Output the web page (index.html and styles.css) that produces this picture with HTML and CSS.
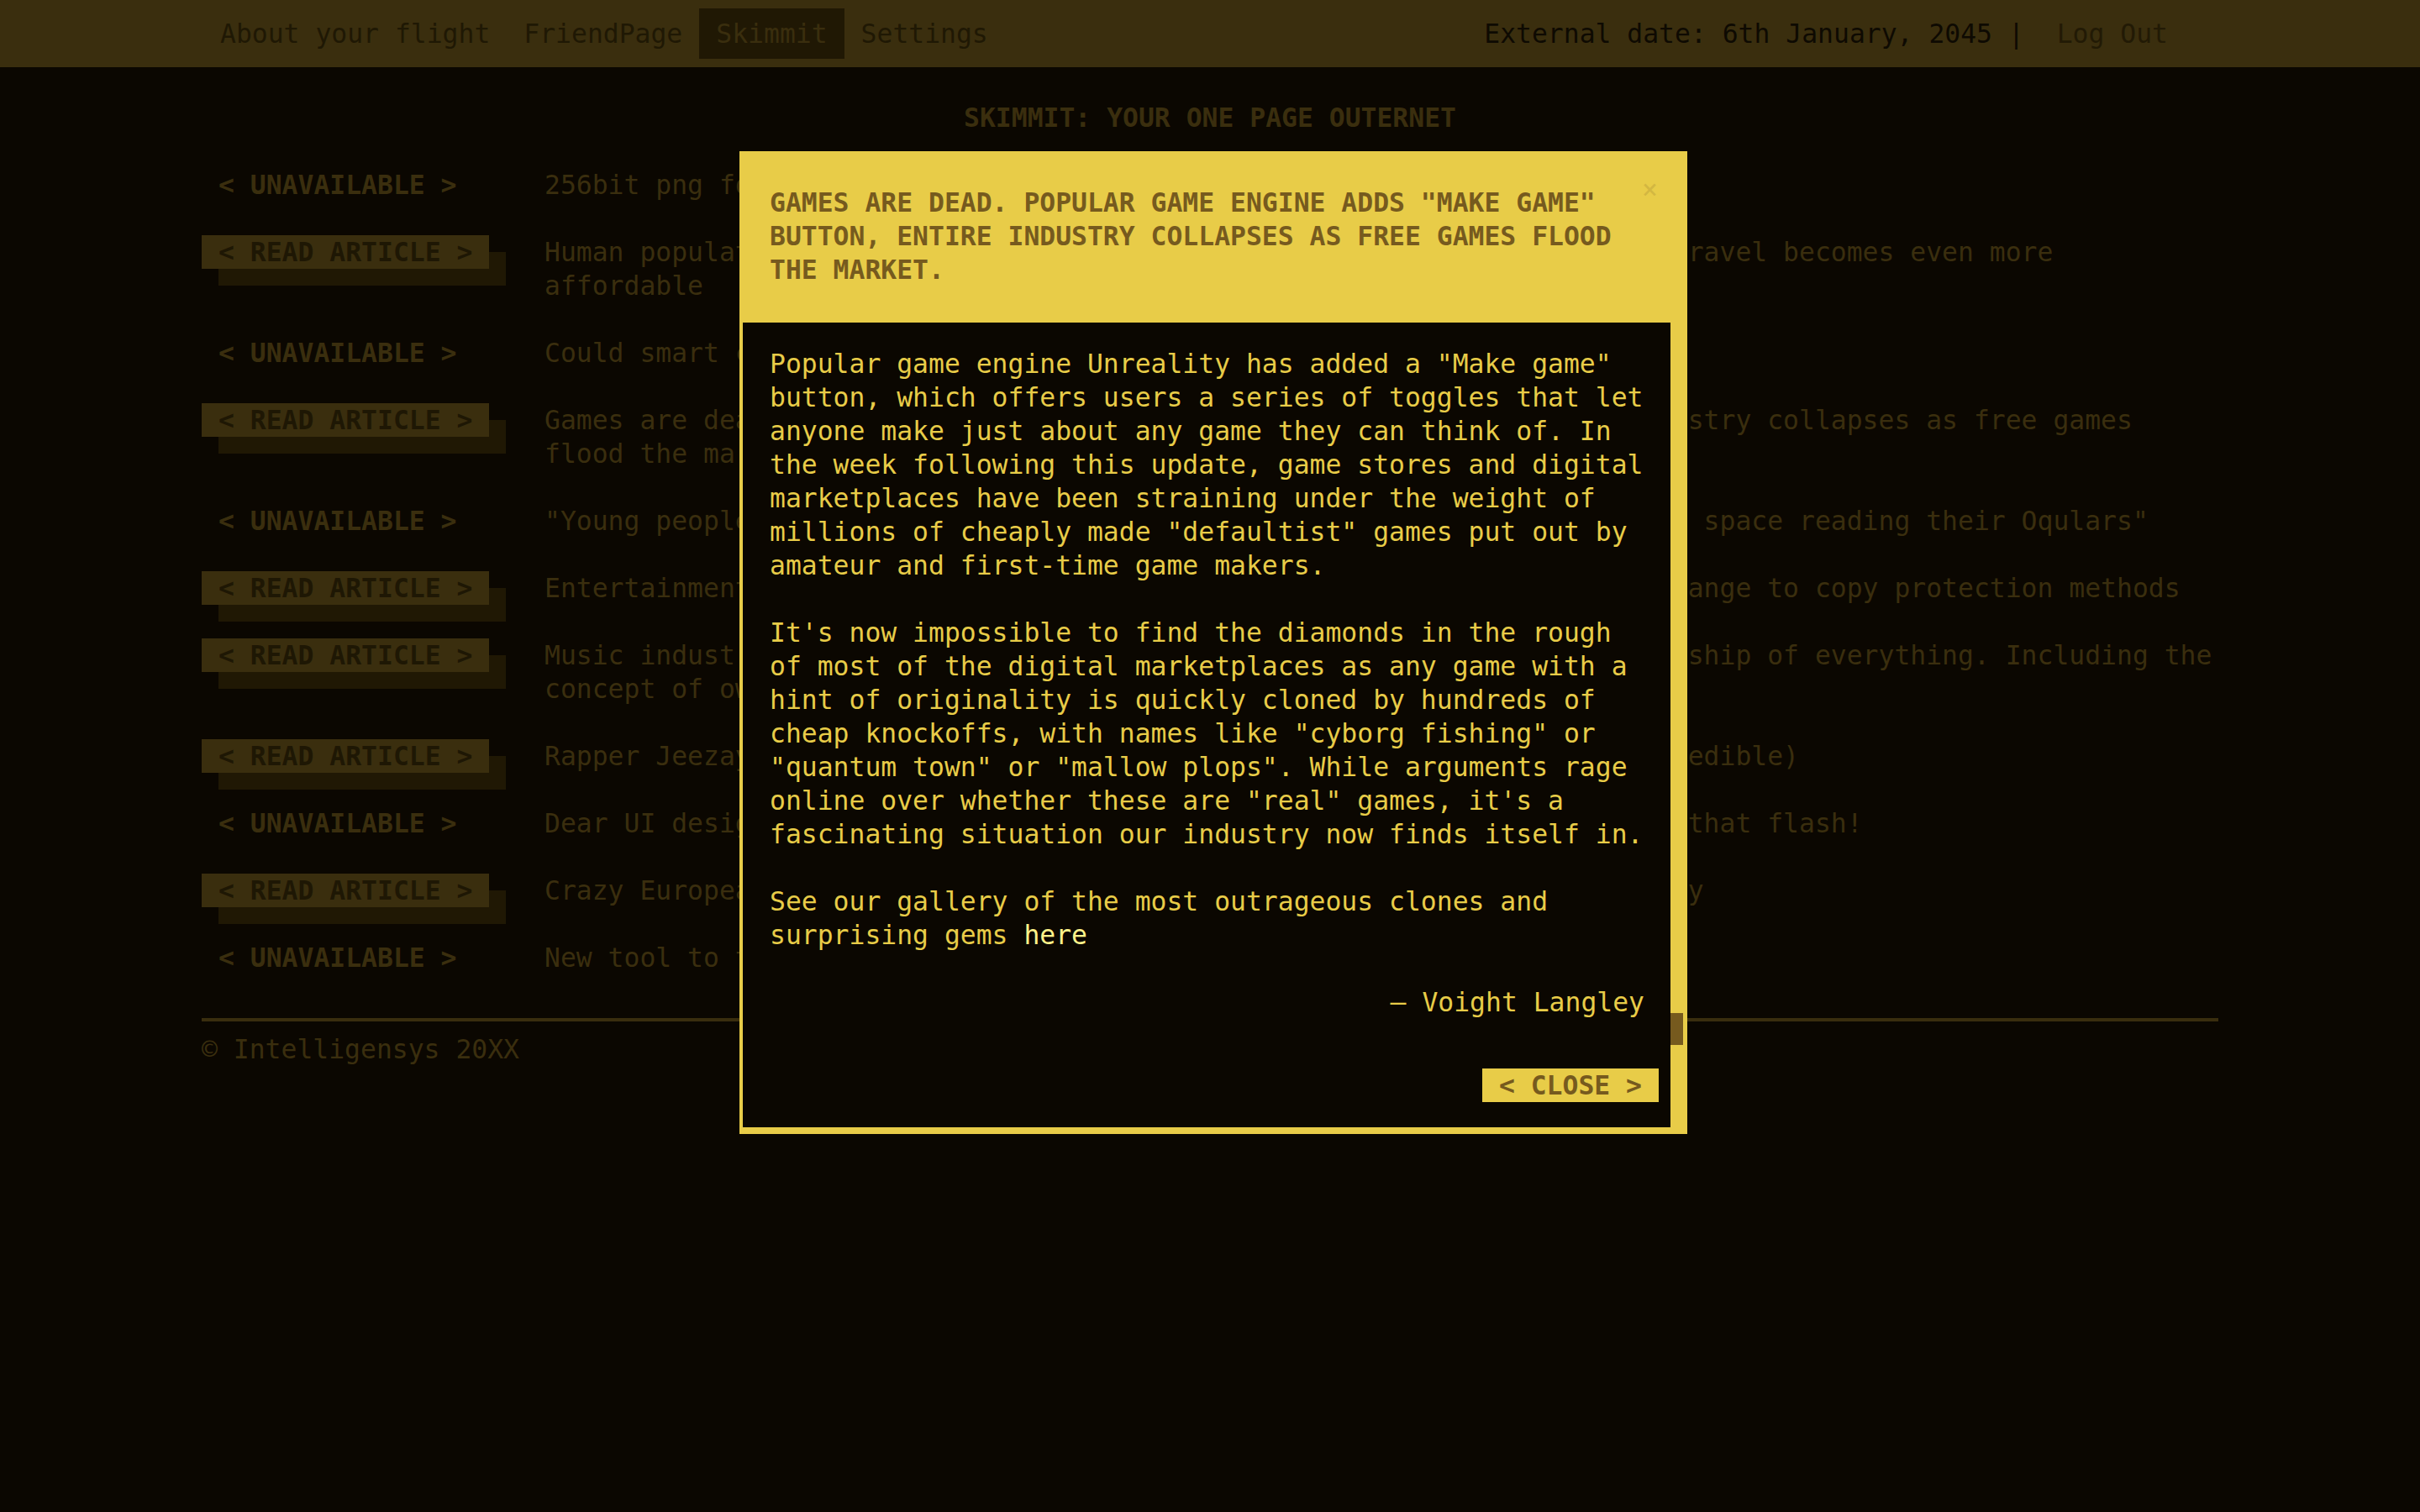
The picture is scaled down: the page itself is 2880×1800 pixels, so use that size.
FILE: index.html
```html
<!DOCTYPE html>
<html lang="en">
<head>
<meta charset="utf-8">
<title>Skimmit</title>
<link rel="stylesheet" href="styles.css">
</head>
<body>
<header class="topnav">
  <div class="wrap nav-inner">
    <nav class="nav-links">
      <a class="nav-link">About your flight</a>
      <a class="nav-link">FriendPage</a>
      <a class="nav-link active">Skimmit</a>
      <a class="nav-link">Settings</a>
    </nav>
    <div class="nav-right"><span class="ext-date">External date: 6th January, 2045 | </span><a class="logout">Log Out</a></div>
  </div>
</header>

<main class="wrap">
  <h1 class="page-title">Skimmit: your one page outernet</h1>
  <ul class="articles">
    <li class="article"><span class="btn btn-unavail">&lt; Unavailable &gt;</span><span class="desc">256bit png format finally approved as new universal image standard</span></li>
    <li class="article"><span class="btn btn-read">&lt; Read article &gt;</span><span class="desc">Human population of Mars nears twelve million, as interplanetary space travel becomes even more affordable</span></li>
    <li class="article"><span class="btn btn-unavail">&lt; Unavailable &gt;</span><span class="desc">Could smart contact lenses replace the humble screen?</span></li>
    <li class="article"><span class="btn btn-read">&lt; Read article &gt;</span><span class="desc">Games are dead. Popular game engine adds "Make game" button, entire industry collapses as free games flood the market.</span></li>
    <li class="article"><span class="btn btn-unavail">&lt; Unavailable &gt;</span><span class="desc">"Young people these days spend most of their waking moments wandering in space reading their Oqulars"</span></li>
    <li class="article"><span class="btn btn-read">&lt; Read article &gt;</span><span class="desc">Entertainment industry in uproar over proposed government legislative change to copy protection methods</span></li>
    <li class="article"><span class="btn btn-read">&lt; Read article &gt;</span><span class="desc">Music industry lobbyists demand legislation granting them complete ownership of everything. Including the concept of ownership itself.</span></li>
    <li class="article"><span class="btn btn-read">&lt; Read article &gt;</span><span class="desc">Rapper Jeezay releases new album recorded entirely in zero gravity (incredible)</span></li>
    <li class="article"><span class="btn btn-unavail">&lt; Unavailable &gt;</span><span class="desc">Dear UI designers, please stop putting huge animated buttons everywhere that flash!</span></li>
    <li class="article"><span class="btn btn-read">&lt; Read article &gt;</span><span class="desc">Crazy European scientist claims to have discovered life in our own galaxy</span></li>
    <li class="article"><span class="btn btn-unavail">&lt; Unavailable &gt;</span><span class="desc">New tool to translate cat meows into plain English</span></li>
  </ul>
  <footer class="footer">© Intelligensys 20XX</footer>
</main>

<div class="modal">
  <div class="modal-header">
    <h2 class="modal-title">Games are dead. Popular game engine adds "Make game" button, entire industry collapses as free games flood the market.</h2>
    <span class="modal-x">×</span>
  </div>
  <div class="modal-main">
    <div class="modal-body">
      <div class="modal-text">
        <p>Popular game engine Unreality has added a "Make game" button, which offers users a series of toggles that let anyone make just about any game they can think of. In the week following this update, game stores and digital marketplaces have been straining under the weight of millions of cheaply made "defaultist" games put out by amateur and first-time game makers.</p>
        <p>It's now impossible to find the diamonds in the rough of most of the digital marketplaces as any game with a hint of originality is quickly cloned by hundreds of cheap knockoffs, with names like "cyborg fishing" or "quantum town" or "mallow plops". While arguments rage online over whether these are "real" games, it's a fascinating situation our industry now finds itself in.</p>
        <p>See our gallery of the most outrageous clones and surprising gems <a class="here">here</a></p>
        <p class="signature">– Voight Langley</p>
      </div>
      <div class="modal-actions"><span class="btn btn-close">&lt; Close &gt;</span></div>
    </div>
    <div class="scrollbar"><div class="thumb"></div></div>
  </div>
</div>
</body>
</html>
```

FILE: styles.css
```css
* {
  box-sizing: border-box;
}

html, body {
  margin: 0;
  padding: 0;
}

body {
  background: #0b0701;
  color: #3a2e0e;
  font-family: "DejaVu Sans Mono", "Liberation Mono", monospace;
  font-size: 31.4px;
  line-height: 40px;
  height: 1800px;
  overflow: hidden;
}

a {
  text-decoration: none;
  color: inherit;
}

.wrap {
  width: 2400px;
  margin: 0 auto;
}

/* Top navigation */
.topnav {
  height: 80px;
  background: #3a2e0e;
}

.nav-inner {
  display: flex;
  justify-content: space-between;
  align-items: center;
  height: 80px;
}

.nav-links {
  display: flex;
  padding-left: 2px;
}

.nav-link {
  padding: 10px 20px;
  line-height: 40px;
  color: #1f1804;
}

.nav-link.active {
  background: #201804;
  color: #3a2e0e;
}

.nav-right {
  display: flex;
  align-items: center;
  margin-right: 40px;
  white-space: pre;
}

.ext-date {
  color: #0e0a02;
}

.logout {
  padding: 0 20px;
  color: #221a05;
}

/* Page */
.page-title {
  margin: 40px 0 0;
  font-size: inherit;
  line-height: 40px;
  font-weight: bold;
  text-align: center;
  text-transform: uppercase;
  color: #3a2e0e;
}

.articles {
  list-style: none;
  margin: 40px 0 0;
  padding: 0;
}

.article {
  display: grid;
  grid-template-columns: 408px 1fr;
  margin-bottom: 40px;
}

.btn {
  justify-self: start;
  align-self: start;
  display: inline-block;
  padding: 0 20px;
  line-height: 40px;
  font-weight: bold;
  text-transform: uppercase;
  white-space: pre;
}

.btn-unavail {
  color: #3a2e0e;
}

.btn-read {
  background: #3a2e0e;
  color: #1e1704;
  box-shadow: 20px 20px 0 #201804;
}

.desc {
  color: #3a2e0e;
}

.footer {
  margin-top: 52px;
  border-top: 4px solid #3a2e0e;
  padding-top: 13px;
  color: #3a2e0e;
}

/* Modal */
.modal {
  position: absolute;
  left: 880px;
  top: 180px;
  width: 1128px;
  background: #e8cc48;
  padding: 0 4px 8px;
}

.modal-header {
  position: relative;
  padding: 41px 43px 43px 32px;
}

.modal-title {
  margin: 0;
  font-size: inherit;
  line-height: 40px;
  font-weight: bold;
  text-transform: uppercase;
  color: #765a1e;
}

.modal-x {
  position: absolute;
  top: 25px;
  right: 31px;
  line-height: 40px;
  color: #d3b741;
}

.modal-main {
  display: flex;
}

.modal-body {
  flex: 1;
  background: #0b0701;
  color: #e8cc48;
  padding: 29px 14px 30px 32px;
}

.modal-text {
  padding-right: 13px;
}

.modal-text p {
  margin: 0 0 40px;
}

.modal-text .signature {
  margin: 0 4px 0 0;
  text-align: right;
}

.here {
  color: #fff38a;
}

.modal-actions {
  display: flex;
  justify-content: flex-end;
  margin-top: 59px;
}

.btn-close {
  background: #e8cc48;
  color: #765a1e;
}

.scrollbar {
  width: 16px;
  display: flex;
  flex-direction: column;
}

.thumb {
  margin-top: 822px;
  width: 15px;
  height: 38px;
  background: #765a1e;
}
```
